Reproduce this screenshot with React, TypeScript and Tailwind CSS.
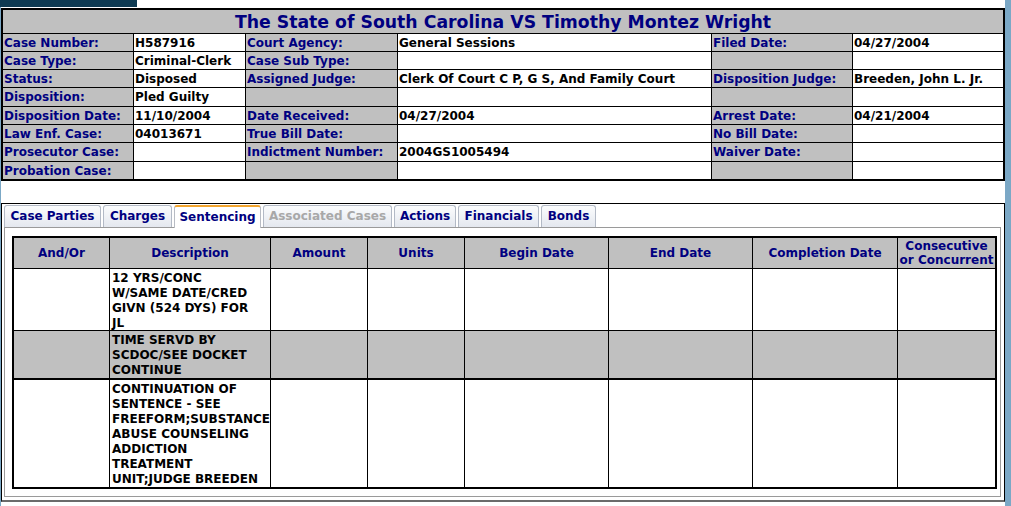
import React from "react";

type Cell = { text: string; label: boolean };

const caseRows: { h: string; cells: string[] }[] = [
  { h: "h-[17px]", cells: ["Case Number:", "H587916", "Court Agency:", "General Sessions", "Filed Date:", "04/27/2004"] },
  { h: "h-[17px]", cells: ["Case Type:", "Criminal-Clerk", "Case Sub Type:", "", "", ""] },
  { h: "h-[17px]", cells: ["Status:", "Disposed", "Assigned Judge:", "Clerk Of Court C P, G S, And Family Court", "Disposition Judge:", "Breeden, John L. Jr."] },
  { h: "h-[18px]", cells: ["Disposition:", "Pled Guilty", "", "", "", ""] },
  { h: "h-[17px]", cells: ["Disposition Date:", "11/10/2004", "Date Received:", "04/27/2004", "Arrest Date:", "04/21/2004"] },
  { h: "h-[17px]", cells: ["Law Enf. Case:", "04013671", "True Bill Date:", "", "No Bill Date:", ""] },
  { h: "h-[18px]", cells: ["Prosecutor Case:", "", "Indictment Number:", "2004GS1005494", "Waiver Date:", ""] },
  { h: "h-[17px]", cells: ["Probation Case:", "", "", "", "", ""] },
];

const tabs = [
  { name: "Case Parties", state: "normal", w: "w-[97px]" },
  { name: "Charges", state: "normal", w: "w-[69px]" },
  { name: "Sentencing", state: "active", w: "w-[87px]" },
  { name: "Associated Cases", state: "disabled", w: "w-[129px]" },
  { name: "Actions", state: "normal", w: "w-[62px]" },
  { name: "Financials", state: "normal", w: "w-[81px]" },
  { name: "Bonds", state: "normal", w: "w-[55px]" },
];

const headers = ["And/Or", "Description", "Amount", "Units", "Begin Date", "End Date", "Completion Date"];

const sentences = [
  { h: "h-[61px]", gray: false, lines: ["12 YRS/CONC", "W/SAME DATE/CRED", "GIVN (524 DYS) FOR", "JL"] },
  { h: "h-[47px]", gray: true, lines: ["TIME SERVD BY", "SCDOC/SEE DOCKET", "CONTINUE"] },
  { h: "h-[107px]", gray: false, lines: ["CONTINUATION OF", "SENTENCE - SEE", "FREEFORM;SUBSTANCE", "ABUSE COUNSELING", "ADDICTION", "TREATMENT", "UNIT;JUDGE BREEDEN"] },
];

const cols = "grid-cols-[95px_160px_96px_96px_143px_143px_144px_97px]";

function InfoCell({ cell, h }: { cell: Cell; h: string }) {
  return (
    <div
      className={`${h} pl-[1px] pt-[2px] leading-[15px] whitespace-nowrap overflow-hidden ${
        cell.label ? "bg-[#c0c0c0] text-[#000080]" : "bg-white text-black"
      }`}
    >
      {cell.text}
    </div>
  );
}

export default function App() {
  return (
    <div className="min-h-screen bg-[#7ba8c6] font-['DejaVu_Sans',sans-serif] font-bold text-[12px]">
      <div className="ml-[1px] w-[1004px] min-h-[506px] bg-white">
        {/* switch view button, mostly scrolled off */}
        <div className="-ml-[1px] h-[7px] w-[137px] overflow-hidden bg-[#0e3a52] text-white text-[13px] leading-[13px] text-center">
          <div className="-mt-[11px]">Switch View</div>
        </div>

        {/* case header table */}
        <div className="mt-[1px] grid grid-cols-[130px_111px_151px_313px_140px_150px] gap-px bg-black border-2 border-black">
          <div className="col-span-6 h-[23px] pt-[2px] bg-[#c0c0c0] text-[#000080] text-[17.3px] leading-[21px] text-center">
            The State of South Carolina VS Timothy Montez Wright
          </div>
          {caseRows.map((row, r) =>
            row.cells.map((text, i) => (
              <InfoCell key={`${r}-${i}`} h={row.h} cell={{ text, label: i % 2 === 0 }} />
            ))
          )}
        </div>

        {/* tabs */}
        <div className="mt-[22px] border border-black border-b-2 border-b-[#6b6b6b] px-[1px] pt-[1px] pb-[3px]">
          <div className="flex gap-[2px] pl-px">
            {tabs.map((t) => (
              <div
                key={t.name}
                className={`${t.w} h-[22px] text-center leading-[20px] rounded-t-[3px] border border-b-0 ${
                  t.state === "active"
                    ? "bg-white border-[#b8bcc4] border-t-2 border-t-[#f3a52e] text-[#000080] leading-[19px] relative z-10 h-[23px]"
                    : t.state === "disabled"
                    ? "bg-gradient-to-b from-[#fbfcfd] to-[#e4e8ef] border-[#b3bac6] text-[#a8a8a8]"
                    : "bg-gradient-to-b from-[#fbfcfd] to-[#e4e8ef] border-[#b3bac6] text-[#000080]"
                }`}
              >
                {t.name}
              </div>
            ))}
          </div>
          <div className="-mt-px ml-px mr-[2px] border border-[#9a9a9a] pl-[7px] pt-[8px] pb-[7px]">
            <div className={`grid ${cols} w-[985px] gap-px bg-black border-2 border-black`}>
              {headers.map((h) => (
                <div key={h} className="h-[30px] bg-[#c0c0c0] text-[#000080] flex items-center justify-center">
                  {h}
                </div>
              ))}
              <div className="h-[30px] bg-[#c0c0c0] text-[#000080] flex flex-col items-center justify-center leading-[14px]">
                <span>Consecutive</span>
                <span>or Concurrent</span>
              </div>
              {sentences.map((s, r) =>
                Array.from({ length: 8 }).map((_, i) => (
                  <div
                    key={`${r}-${i}`}
                    className={`${s.h} ${r === 2 ? "mt-px" : ""} ${s.gray ? "bg-[#c0c0c0]" : "bg-white"} text-black pl-[2px] pt-[2px] leading-[15px] whitespace-nowrap`}
                  >
                    {i === 1 && s.lines.map((l) => <div key={l}>{l}</div>)}
                  </div>
                ))
              )}
            </div>
          </div>
        </div>
      </div>
    </div>
  );
}
